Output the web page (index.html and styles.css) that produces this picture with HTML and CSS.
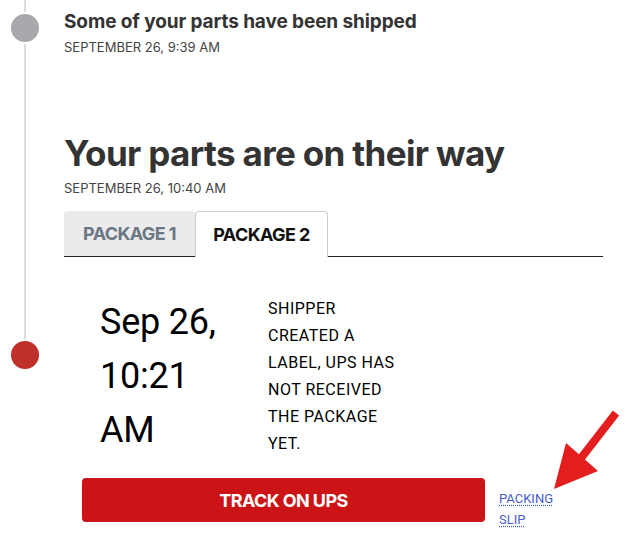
FILE: index.html
```html
<!DOCTYPE html>
<html>
<head>
<meta charset="utf-8">
<link rel="stylesheet" href="styles.css">
</head>
<body>
<div class="timeline">
  <div class="event event-past">
    <h3 class="event-title">Some of your parts have been shipped</h3>
    <div class="event-date">SEPTEMBER 26, 9:39 AM</div>
  </div>
  <div class="event event-current">
    <h2 class="event-heading">Your parts are on their way</h2>
    <div class="event-date">SEPTEMBER 26, 10:40 AM</div>
    <div class="tabs">
      <div class="tab">PACKAGE 1</div>
      <div class="tab tab-active">PACKAGE 2</div>
      <div class="tab-rest"></div>
    </div>
    <div class="status">
      <div class="status-date">Sep 26, 10:21 AM</div>
      <div class="status-text">SHIPPER CREATED A LABEL, UPS HAS NOT RECEIVED THE PACKAGE YET.</div>
    </div>
    <div class="actions">
      <a class="track-btn" href="#">TRACK ON UPS</a>
      <a class="packing-link" href="#">PACKING<br>SLIP</a>
    </div>
  </div>
</div>
<svg class="arrow" width="80" height="90" viewBox="0 0 80 90">
  <line x1="68" y1="11" x2="30" y2="60" stroke="#e41e1e" stroke-width="8"/>
  <polygon points="6,87 18,41 50,69" fill="#e41e1e"/>
</svg>
</body>
</html>
```

FILE: styles.css
```css
html, body {
  margin: 0;
  padding: 0;
  background: #fff;
}
body {
  width: 630px;
  height: 551px;
  overflow: hidden;
  position: relative;
  font-family: Inter, "Liberation Sans", sans-serif;
  color: #333;
}
.timeline {
  position: relative;
  padding-left: 64px;
  width: 539px;
}
.timeline::before {
  content: "";
  position: absolute;
  left: 24px;
  top: 0;
  width: 2px;
  height: 339px;
  background: #dcdcdc;
}
.event {
  position: relative;
}
.event::before {
  content: "";
  position: absolute;
  left: -55px;
  width: 28px;
  height: 28px;
  border-radius: 50%;
  border: 2px solid #fff;
}
.event-past {
  padding-top: 10px;
  height: 121px;
}
.event-past::before {
  top: 12px;
  background: #a8a8ad;
}
.event-current::before {
  top: 208px;
  background: #c0302a;
}
.event-title {
  margin: 0;
  font-size: 19px;
  line-height: 24px;
  font-weight: 700;
  color: #333;
  letter-spacing: -0.1px;
}
.event-date {
  font-size: 13px;
  line-height: 18px;
  margin-top: 4px;
  color: #444;
}
.event-heading {
  margin: 0;
  font-size: 35px;
  line-height: 44px;
  font-weight: 700;
  color: #333;
  letter-spacing: -0.65px;
}
.event-current .event-date {
  margin-top: 4px;
}
.tabs {
  display: flex;
  margin-top: 14px;
  height: 46px;
}
.tab {
  width: 131px;
  display: flex;
  align-items: center;
  justify-content: center;
  background: #ebebeb;
  border-bottom: 1px solid #222;
  border-radius: 3px 3px 0 0;
  font-size: 18px;
  font-weight: 700;
  color: #6c7784;
  letter-spacing: -0.6px;
  box-sizing: border-box;
}
.tab-active {
  width: 133px;
  background: #fff;
  color: #111;
  border: 1px solid #ccc;
  border-bottom: none;
  border-radius: 4px 4px 0 0;
}
.tab-rest {
  width: 275px;
  border-bottom: 1px solid #222;
}
.status {
  display: grid;
  grid-template-columns: 140px 140px;
  column-gap: 28px;
  padding-left: 36px;
  margin-top: 38px;
}
.status-date {
  font-family: Roboto, "Liberation Sans", sans-serif;
  font-size: 36px;
  line-height: 54px;
  color: #000;
  letter-spacing: -0.2px;
}
.status-text {
  font-family: Roboto, "Liberation Sans", sans-serif;
  font-size: 16px;
  line-height: 27px;
  color: #000;
  letter-spacing: 0.5px;
}
.actions {
  display: flex;
  align-items: flex-start;
  padding-left: 18px;
  margin-top: 21px;
}
.track-btn {
  width: 403px;
  height: 44px;
  display: flex;
  align-items: center;
  justify-content: center;
  background: #cc1417;
  border-radius: 4px;
  color: #fff;
  font-weight: 700;
  font-size: 18px;
  letter-spacing: -0.6px;
  text-decoration: none;
}
.packing-link {
  margin-left: 14px;
  margin-top: 10px;
  font-family: Roboto, "Liberation Sans", sans-serif;
  font-size: 13px;
  line-height: 21px;
  color: #4a5ccc;
  text-decoration: underline dotted;
  text-underline-offset: 2px;
}
.arrow {
  position: absolute;
  left: 548px;
  top: 402px;
}
```
